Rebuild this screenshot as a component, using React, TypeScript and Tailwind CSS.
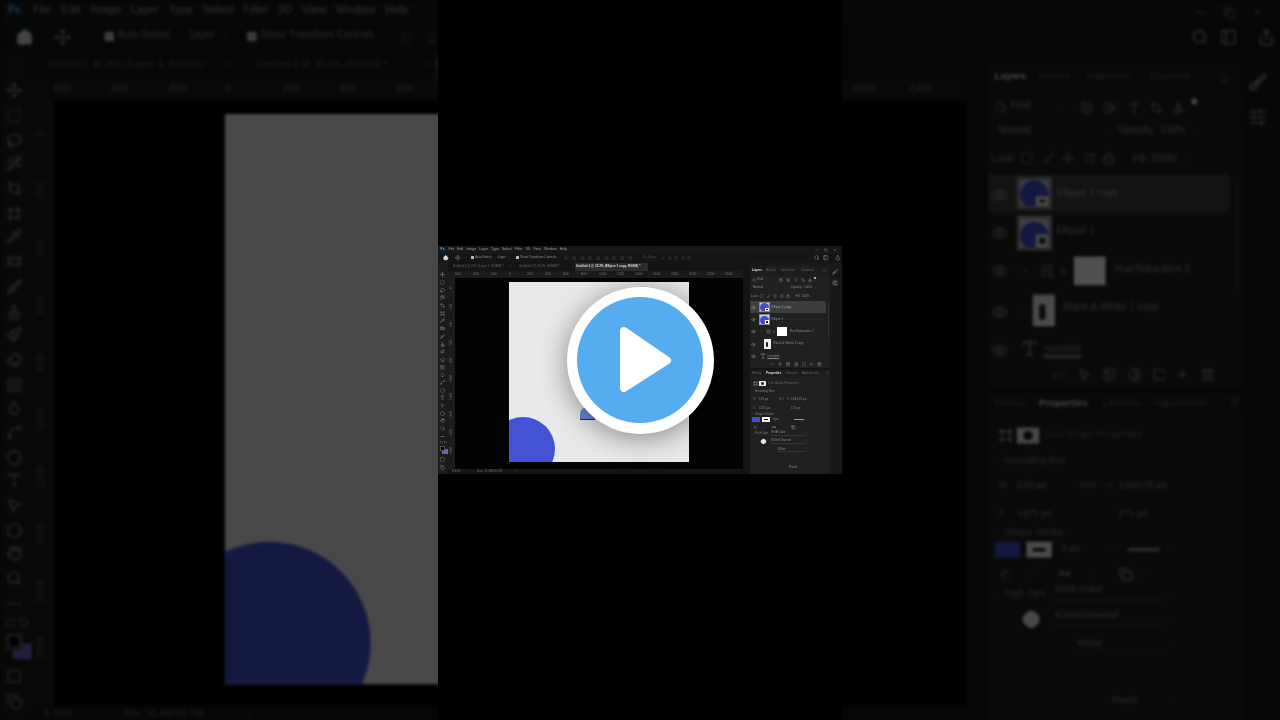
import {
  ALargeSmall, Bandage, Brush, ChevronDown, Circle, Contrast, Crop, Droplet, Ellipsis, Eraser, Eye, Folder, Frame,
  Hand, Home, Image as ImageIcon, Lasso, Link2, Lock, Menu, Minus, Move, MousePointer2, Paintbrush, PanelLeft, Pipette, Plus,
  Search, Share, SlidersHorizontal, Square, SquareDashed, SquareSquare, Stamp, Trash2, Type, WandSparkles, X, AlignCenter,
  AlignLeft, AlignRight, Copy, Spline,
} from "lucide-react";
import type { ReactNode } from "react";

const toolIcons = [
  Move, SquareDashed, Lasso, WandSparkles, Crop, Frame, Pipette, Bandage, Brush, Stamp, Paintbrush, Eraser,
  SquareSquare, Droplet, Spline, Circle, Type, MousePointer2, Circle, Hand, Search, Ellipsis,
];
const menus = ["File", "Edit", "Image", "Layer", "Type", "Select", "Filter", "3D", "View", "Window", "Help"];
const hRuler = [600, 400, 200, 0, 200, 400, 600, 800, 1000, 1200, 1400, 1600, 1800, 2000, 2200, 2400];
const vRuler = [0, 200, 400, 600, 800, 1000, 1200, 1400, 1600, 1800];
const alignIcons = [AlignLeft, AlignCenter, AlignRight, AlignLeft, AlignCenter, AlignRight, AlignLeft, AlignCenter, AlignRight];

function Caret({ className = "" }: { className?: string }) {
  return <ChevronDown size={3} className={`text-[#5f5f5f] ${className}`} />;
}

function EllipseThumb({ badge }: { badge?: boolean }) {
  return (
    <div className="relative w-[11px] h-[10.5px] bg-[#c9cfe8] border-[0.3px] border-[#8a8a8a] overflow-hidden flex justify-center pt-[0.5px]">
      <div className="w-[9px] h-[9px] rounded-full bg-[#3f4dc9]" />
      {badge && <div className="absolute right-0 bottom-0 w-[3.5px] h-[3.5px] bg-[#222] border-[0.3px] border-white" />}
    </div>
  );
}

function LayerRow({ children, active }: { children: ReactNode; active?: boolean }) {
  return (
    <div className={`h-[12.3px] flex items-center pl-[1px] ${active ? "bg-[#3b3e3a]" : ""}`}>
      <Eye size={5} strokeWidth={1.6} className="text-[#a8a8a8] shrink-0" />
      {children}
    </div>
  );
}

function PropRow({ h, children }: { h: string; children: ReactNode }) {
  return <div className={`flex items-center ${h}`}>{children}</div>;
}

function LayersPanel() {
  return (
    <div className="w-[80px] flex flex-col">
      <div className="h-[10px] mt-[3.5px] flex items-center bg-[#1b1e1a] text-[3.1px]">
        <span className="ml-[2px] w-[14px] text-[#dcdcdc] font-bold">Layers</span>
        <span className="w-[15px] text-[#666]">History</span>
        <span className="w-[20px] text-[#666]">Swatches</span>
        <span className="w-[22px] text-[#666]">Channels</span>
        <Menu size={3.5} className="text-[#666]" />
      </div>
      <div className="bg-[#1e211d] flex flex-col">
        <PropRow h="h-[8px]">
          <Search size={4} strokeWidth={1.6} className="ml-[2px] text-[#9a9a9a]" />
          <span className="ml-[1px] w-[14px]">Kind</span>
          <Caret className="mr-[5px]" />
          <ImageIcon size={4} strokeWidth={1.6} className="mr-[3.4px] text-[#a8a8a8]" />
          <Contrast size={4} strokeWidth={1.6} className="mr-[3.2px] text-[#a8a8a8]" />
          <Type size={4} strokeWidth={1.6} className="mr-[3px] text-[#a8a8a8]" />
          <Crop size={4} strokeWidth={1.6} className="mr-[3.4px] text-[#a8a8a8]" />
          <Stamp size={4} strokeWidth={1.6} className="text-[#a8a8a8]" />
          <div className="ml-[2px] mb-[3px] w-[2.5px] h-[2.5px] rounded-full bg-[#d6d6d6]" />
        </PropRow>
        <PropRow h="h-[8.6px]">
          <span className="ml-[3px] w-[34px]">Normal</span>
          <Caret className="mr-[1px]" />
          <span className="w-[13px]">Opacity:</span>
          <span className="w-[10px]">100%</span>
          <Caret />
        </PropRow>
        <PropRow h="h-[8.4px]">
          <span className="ml-[1px] w-[9px]">Lock:</span>
          <Square size={4} strokeWidth={1.6} className="mr-[2.7px] text-[#808080]" />
          <Brush size={4} strokeWidth={1.6} className="mr-[2.5px] text-[#808080]" />
          <Move size={4} strokeWidth={1.6} className="mr-[2.6px] text-[#909090]" />
          <Frame size={4} strokeWidth={1.6} className="mr-[2.6px] text-[#808080]" />
          <Lock size={4} strokeWidth={1.6} className="mr-[5px] text-[#b8b8b8]" />
          <span className="w-[6px]">Fill:</span>
          <span className="w-[10px]">100%</span>
          <Caret />
        </PropRow>
      </div>
      <div className="flex bg-[#1e211d] pt-[0.5px]">
        <div className="w-[76px] flex flex-col">
          <LayerRow active>
            <div className="ml-[2.5px]"><EllipseThumb badge /></div>
            <span className="ml-[2px] text-[#a0a0a0]">Ellipse 1 copy</span>
          </LayerRow>
          <LayerRow>
            <div className="ml-[2.5px]"><EllipseThumb badge /></div>
            <span className="ml-[2px]">Ellipse 1</span>
          </LayerRow>
          <LayerRow>
            <ChevronDown size={3} className="ml-[4px] -rotate-90" />
            <SlidersHorizontal size={5} strokeWidth={1.6} className="ml-[3px] text-[#9c9c9c]" />
            <Link2 size={3.5} className="ml-[1.2px] rotate-90 text-[#777]" />
            <div className="ml-[1.6px] w-[9.5px] h-[9.5px] bg-white" />
            <span className="ml-[3px]">Hue/Saturation 1</span>
          </LayerRow>
          <LayerRow>
            <ChevronDown size={3} className="ml-[4px] -rotate-90" />
            <div className="ml-[0.5px] w-[7.6px] h-[9.3px] bg-[#eeeeee] flex items-center justify-center">
              <div className="w-[2.4px] h-[5px] rounded-full bg-[#222]" />
            </div>
            <span className="ml-[2.5px]">Black &amp; White 1 copy</span>
          </LayerRow>
          <LayerRow>
            <Type size={6} strokeWidth={1.6} className="ml-[4px] text-[#b0b0b0]" />
            <span className="ml-[1.5px] underline">rounded</span>
          </LayerRow>
        </div>
        <div className="ml-[1.5px] mt-[1px] w-[1.6px] h-[36px] bg-[#2e302d]" />
      </div>
      <div className="h-[7px] -mt-[1.3px] flex items-center bg-[#1e211d] pl-[20px] gap-[3.4px] text-[#b0b0b0]">
        <Link2 size={4.5} className="text-[#555]" />
        <MousePointer2 size={4.5} strokeWidth={1.6} />
        <ImageIcon size={4.5} strokeWidth={1.6} />
        <Contrast size={4.5} strokeWidth={1.6} />
        <Folder size={4.5} strokeWidth={1.6} />
        <Plus size={4.5} strokeWidth={1.6} />
        <Trash2 size={4.5} strokeWidth={1.6} />
      </div>
      <div className="h-[1.5px] bg-[#141613]" />
      <div className="h-[7px] flex items-center bg-[#1b1e1a] text-[3.1px]">
        <span className="ml-[2px] w-[14px] text-[#666]">History</span>
        <span className="w-[20px] text-[#dcdcdc] font-bold">Properties</span>
        <span className="w-[16px] text-[#666]">Libraries</span>
        <span className="w-[24px] text-[#666]">Adjustments</span>
        <Menu size={3.5} className="text-[#666]" />
      </div>
      <div className="flex-1 bg-[#1e211d] flex flex-col text-[3.1px]">
        <PropRow h="h-[10px] mt-[2px]">
          <Frame size={5} strokeWidth={1.6} className="ml-[3px] text-[#c4c4c4]" />
          <div className="ml-[1px] w-[7px] h-[5.5px] bg-[#e8e8e8] flex items-center justify-center">
            <div className="w-[3px] h-[3px] rounded-full bg-[#222]" />
          </div>
          <span className="ml-[2px] text-[#666]">Live Shape Properties</span>
        </PropRow>
        <PropRow h="h-[7px] -mt-[0.3px]">
          <Caret className="ml-[1px]" />
          <span className="ml-[1px] text-[#7d7d7d]">Bounding Box</span>
        </PropRow>
        <PropRow h="h-[9px] -mt-[0.6px]">
          <span className="ml-[3px] w-[6px] text-[#666]">W</span>
          <span className="w-[20px]">175 px</span>
          <span className="w-[8px] text-[#777]">GO</span>
          <span className="w-[4px] text-[#666]">H</span>
          <span>1343.75 px</span>
        </PropRow>
        <PropRow h="h-[7px] mt-[1.6px]">
          <span className="ml-[3px] w-[6px] text-[#666]">X</span>
          <span className="w-[32px]">1475 px</span>
          <span>171 px</span>
        </PropRow>
        <PropRow h="h-[5px] -mt-[0.3px]">
          <Caret className="ml-[1px]" />
          <span className="ml-[1px] text-[#7d7d7d]">Shape Stroke</span>
        </PropRow>
        <PropRow h="h-[7px] -mt-[1px]">
          <div className="ml-[2px] w-[7.5px] h-[5px] bg-[#3f4dc9]" />
          <div className="ml-[2.5px] w-[7.5px] h-[5px] bg-[#f2f2f2] flex items-center justify-center">
            <div className="w-[4px] h-[1px] bg-black" />
          </div>
          <span className="ml-[3.5px] w-[15px]">0 px</span>
          <Caret className="mr-[3px]" />
          <div className="w-[10px] h-[0.8px] bg-[#999]" />
          <Caret className="ml-[1px]" />
        </PropRow>
        <PropRow h="h-[8px] mt-[0.3px]">
          <Square size={3.5} strokeWidth={1.6} className="ml-[3.5px] text-[#b0b0b0]" />
          <Caret className="ml-[5px] mr-[7px]" />
          <ALargeSmall size={4} strokeWidth={1.6} className="text-[#c4c4c4]" />
          <Caret className="ml-[5px] mr-[7px]" />
          <Copy size={4.5} strokeWidth={1.6} className="text-[#d0d0d0]" />
          <Caret className="ml-[1px]" />
        </PropRow>
        <PropRow h="h-[5.5px] -mt-[0.6px]">
          <Caret className="ml-[1px]" />
          <span className="ml-[1px] w-[16px] text-[#7d7d7d]">Path Ops</span>
          <span className="w-[34px] border-b-[0.3px] border-[#33352f]">RGB Color</span>
          <Caret />
        </PropRow>
        <PropRow h="h-[8px] mt-[1.2px]">
          <div className="ml-[11px] w-[5px] h-[5px] rounded-[2px] rotate-45 bg-[#e4e4e4]" />
          <span className="ml-[5px] w-[34px] border-b-[0.3px] border-[#33352f]">8 Bits/Channel</span>
          <Caret />
        </PropRow>
        <PropRow h="h-[8px] mt-[0.3px]">
          <span className="ml-[28px] w-[28px] border-b-[0.3px] border-[#33352f]">White</span>
          <Caret />
        </PropRow>
        <PropRow h="h-[13.6px] mt-[2px] items-end">
          <span className="ml-[39px] w-[16.5px]">Pixels</span>
          <Caret className="mb-[0.5px]" />
        </PropRow>
      </div>
    </div>
  );
}

function PsWindow() {
  return (
    <div className="w-[404px] h-[228px] flex flex-col overflow-hidden bg-[#171917] text-[3.2px] leading-none text-[#8c8c8c] font-['Liberation_Sans',sans-serif]">
      {/* menu bar */}
      <div className="h-[7.5px] shrink-0 flex items-center">
        <div className="ml-[1.5px] w-[6px] h-[6px] bg-[#0b2233] text-[#5fb3e6] text-[3.2px] font-bold flex items-center justify-center">Ps</div>
        <div className="ml-[3px] flex gap-[3.15px] text-[#9c9c9c] text-[3.5px]">
          {menus.map((m) => <span key={m}>{m}</span>)}
        </div>
        <div className="ml-auto mr-[5px] flex items-center gap-[5px] text-[#888]">
          <Minus size={4} strokeWidth={1.6} />
          <Copy size={4} strokeWidth={1.6} />
          <X size={4} strokeWidth={1.6} />
        </div>
      </div>
      {/* options bar */}
      <div className="h-[8.5px] shrink-0 flex items-center bg-[#141614]">
        <Home size={5.5} className="ml-[5px] text-[#d8d8d8]" fill="#d8d8d8" />
        <Move size={5.5} strokeWidth={1.6} className="ml-[6.5px] text-[#a8a8a8]" />
        <Caret className="ml-[2px]" />
        <div className="ml-[5px] w-[3.4px] h-[3.4px] rounded-[0.6px] bg-[#bdbdbd]" />
        <span className="ml-[1px] w-[21px]">Auto-Select:</span>
        <span className="w-[9px] ml-[2px]">Layer</span>
        <Caret className="mr-[6px]" />
        <div className="w-[3.4px] h-[3.4px] rounded-[0.6px] bg-[#bdbdbd]" />
        <span className="ml-[1px] w-[40px]">Show Transform Controls</span>
        <div className="ml-[4px] flex gap-[3.5px] text-[#6f6f6f]">
          {alignIcons.map((Icon, i) => <Icon key={i} size={4.5} strokeWidth={1.6} />)}
        </div>
        <div className="ml-[10px] flex gap-[2.5px] text-[#4d4d4d]">
          <span className="text-[3.2px] mr-[2px]">3D Mode:</span>
          <Brush size={4} />
          <Move size={4} />
          <Hand size={4} />
          <Move size={4} />
          <Frame size={4} />
        </div>
        <div className="ml-auto mr-[2px] flex items-center gap-[3.5px] text-[#b8b8b8]">
          <Search size={5.5} strokeWidth={1.6} className="mr-[0.5px]" />
          <PanelLeft size={5.5} strokeWidth={1.6} className="mr-[2.5px]" />
          <Share size={5.5} strokeWidth={1.6} />
        </div>
      </div>
      <div className="flex-1 flex min-h-0">
        {/* tools */}
        <div className="w-[10px] shrink-0 pt-[9px] pl-[2px] flex flex-col bg-[#1a1c19] text-[#a0a0a0]">
          {toolIcons.map((Icon, i) => (
            <div key={i} className="h-[7.7px] shrink-0 flex items-center">
              <Icon size={5} strokeWidth={1.7} />
            </div>
          ))}
          <div className="h-[4px] mt-[1px] flex gap-[1px] text-[#999]">
            <Square size={3} />
            <Square size={3} />
          </div>
          <div className="relative h-[11.5px] mt-[0.5px] -ml-[0.8px]">
            <div className="absolute left-[3.2px] top-[3px] w-[5.5px] h-[5.5px] bg-[#6a62c8]" />
            <div className="absolute left-[0.5px] top-[0.5px] w-[5px] h-[5px] bg-black border-[0.3px] border-[#555]" />
          </div>
          <Square size={5} strokeWidth={1.6} className="mb-[2.5px]" />
          <Copy size={5} strokeWidth={1.6} />
        </div>
        <div className="w-[295px] shrink-0 flex flex-col">
          {/* document tabs */}
          <div className="h-[8.5px] pt-[1px] shrink-0 flex items-center bg-[#131513] text-[3.1px]">
            <span className="ml-[5px] w-[56px] text-[#666]">Untitled-1 @ 25% (Layer 1, RGB/8) *</span>
            <span className="w-[10px] text-[#555]">×</span>
            <span className="w-[53px] text-[#666]">Untitled-2 @ 33.3% (RGB/8) *</span>
            <span className="w-[3px] text-[#555]">×</span>
            <div className="h-full w-[73px] px-[1px] bg-[#2c2e2b] flex items-center font-bold text-[#dcdcdc] whitespace-nowrap">
              Untitled-3 @ 33.3% (Ellipse 1 copy, RGB/8) *
            </div>
          </div>
          {/* horizontal ruler */}
          <div className="h-[7.5px] shrink-0 flex items-center pl-[7px] bg-[#1a1c19] text-[3.3px] text-[#737373]">
            {hRuler.map((v, i) => <span key={i} className="w-[18px] shrink-0">{v}</span>)}
          </div>
          <div className="flex-1 flex min-h-0">
            {/* vertical ruler */}
            <div className="w-[7px] shrink-0 bg-[#1a1c19] pt-[1px] flex flex-col items-center text-[3.2px] text-[#5e5e5e] overflow-hidden">
              {vRuler.map((v, i) => (
                <span key={i} className="h-[18px] shrink-0 [writing-mode:vertical-rl] rotate-180 text-center">{v}</span>
              ))}
            </div>
            {/* canvas */}
            <div className="flex-1 flex bg-[#020302] pl-[54px] pt-[3.5px] overflow-hidden">
              <div className="relative w-[180px] h-[180px] bg-[#e9e9e9] overflow-hidden">
                <div className="absolute left-[-18px] top-[135px] w-[64px] h-[64px] rounded-full bg-[#4353d4]" />
                <div className="absolute left-[71px] top-[125px] w-[15px] h-[13px] rounded-t-[7px] bg-[#6a8ad8] border-b-[1.5px] border-[#1f2f66]" />
              </div>
            </div>
          </div>
          {/* status bar */}
          <div className="h-[5px] shrink-0 flex items-center bg-[#141614] text-[3.1px] text-[#6f6f6f]">
            <span className="ml-[4px] w-[25px]">8.33%</span>
            <span className="w-[39px]">Doc: 11.4M/35.7M</span>
            <span>›</span>
          </div>
        </div>
        <div className="w-[7px] shrink-0 bg-[#131513]" />
        <LayersPanel />
        {/* right icon strip */}
        <div className="flex-1 pt-[7px] pl-[2px] flex flex-col gap-[5px] text-[#b8b8b8] bg-[#171917]">
          <Brush size={6} strokeWidth={1.6} />
          <SlidersHorizontal size={6} strokeWidth={1.6} />
        </div>
      </div>
    </div>
  );
}

export default function App() {
  return (
    <div className="relative w-[1280px] h-[720px] overflow-hidden bg-black">
      {/* dimmed, enlarged copy of the video behind the letterboxed frame */}
      <div className="absolute left-0 top-0 origin-top-left scale-[3.168] opacity-[0.31] blur-[0.5px]">
        <PsWindow />
      </div>
      <div className="relative mx-auto w-[404px] h-[720px] bg-black flex items-center">
        <div className="blur-[0.4px]">
          <PsWindow />
        </div>
      </div>
      {/* play button */}
      <div className="absolute inset-0 flex items-center justify-center">
        <div className="w-[147px] h-[147px] rounded-full bg-white shadow-[0_4px_28px_rgba(0,0,0,0.42)] flex items-center justify-center relative">
          <div className="w-[126px] h-[126px] rounded-full bg-[#55acee]" />
          <svg viewBox="0 0 147 147" className="absolute inset-0 w-[147px] h-[147px]">
            <polygon points="57,44 100,73.5 57,101" fill="#ffffff" stroke="#ffffff" strokeWidth="8" strokeLinejoin="round" />
          </svg>
        </div>
      </div>
    </div>
  );
}
